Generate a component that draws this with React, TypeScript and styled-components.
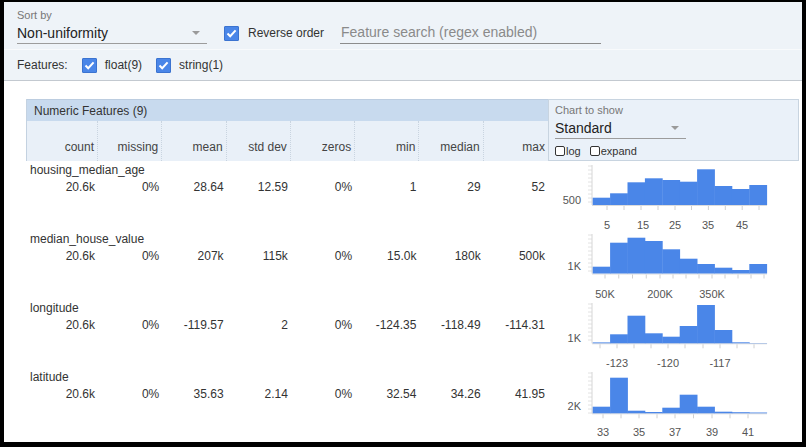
import React from 'react';
import styled, { createGlobalStyle } from 'styled-components';

const GlobalStyle = createGlobalStyle`
  html, body { margin: 0; padding: 0; background: #fff; }
  body { font-family: "Liberation Sans", Arial, sans-serif; color: #333; }
  * { box-sizing: border-box; }
`;

const Frame = styled.div`
  width: 806px;
  height: 447px;
  border-style: solid;
  border-color: #000;
  border-width: 2px 4px 5px 4px;
  background: #fff;
  display: flex;
  flex-direction: column;
  overflow: hidden;
`;

const TopBar = styled.div`
  height: 48px;
  background: #eef3f8;
  border-bottom: 1px solid #f8fafc;
  display: flex;
  align-items: flex-start;
  padding: 7px 0 0 13px;
`;

const SelectBox = styled.div<{ $width: number }>`
  width: ${(p) => p.$width}px;
  display: flex;
  flex-direction: column;
`;

const SmallLabel = styled.div`
  font-size: 11px;
  line-height: 13px;
  color: #777;
`;

const SelectValue = styled.div`
  height: 22px;
  border-bottom: 1px solid #9c9c9c;
  display: flex;
  align-items: center;
  justify-content: space-between;
  padding-right: 7px;
  font-size: 14px;
  color: #222;
`;

const Caret = styled.span`
  width: 0;
  height: 0;
  border-left: 4px solid transparent;
  border-right: 4px solid transparent;
  border-top: 4px solid #9a9a9a;
`;

const CheckGroup = styled.label<{ $mt?: number; $ml?: number; $gap?: number }>`
  display: flex;
  align-items: center;
  gap: ${(p) => p.$gap ?? 8}px;
  margin-top: ${(p) => p.$mt ?? 0}px;
  margin-left: ${(p) => p.$ml ?? 0}px;
  font-size: 12px;
  line-height: 15px;
  color: #333;
`;

const BlueBox = styled.span`
  width: 15px;
  height: 15px;
  background: #4a86e8;
  border: 1px solid #3b73d0;
  border-radius: 1px;
  display: flex;
  align-items: center;
  justify-content: center;
`;

const SearchInput = styled.input`
  margin-left: 16px;
  margin-top: 13px;
  width: 261px;
  height: 22px;
  border: none;
  border-bottom: 1px solid #8c8c8c;
  background: transparent;
  padding: 0 0 1px 1px;
  font-family: "Liberation Sans", Arial, sans-serif;
  font-size: 14px;
  outline: none;
  &::placeholder { color: #8a8a8a; }
`;

const FeatureBar = styled.div`
  height: 31px;
  background: #eef3f8;
  border-bottom: 1px solid #c3c9d0;
  display: flex;
  align-items: center;
  padding-left: 13px;
  font-size: 12px;
  color: #333;
`;

const FeaturesLabel = styled.span`
  margin-right: 14px;
`;

const Content = styled.div`
  flex: 1;
  padding: 18px 0 0 22px;
`;

const Table = styled.div`
  width: 773px;
  display: flex;
  flex-direction: column;
`;

const HeaderBlock = styled.div`
  display: flex;
  height: 62px;
`;

const HeaderLeft = styled.div`
  width: 522px;
  display: flex;
  flex-direction: column;
  border-left: 1px solid #c4d2e1;
`;

const TitleBar = styled.div`
  height: 22px;
  background: #c8daee;
  border-top: 1px solid #bccde0;
  display: flex;
  align-items: center;
  padding-left: 7px;
  font-size: 12px;
  color: #333;
`;

const ColumnRow = styled.div`
  height: 40px;
  background: #e9f0f8;
  display: grid;
  grid-template-columns: 71px repeat(7, 64.29px);
`;

const ColHead = styled.div<{ $last?: boolean }>`
  display: flex;
  align-items: flex-end;
  justify-content: flex-end;
  padding: 0 3px 7px 0;
  font-size: 12px;
  line-height: 14px;
  color: #444;
  border-right: ${(p) => (p.$last ? 'none' : '1px dotted #c9d4e0')};
`;

const ChartPanel = styled.div`
  width: 251px;
  background: #eaf1f9;
  border: 1px solid #c8d4e0;
  padding: 4px 0 0 6px;
  display: flex;
  flex-direction: column;
`;

const SmallChecks = styled.div`
  display: flex;
  align-items: center;
  margin-top: 5px;
  font-size: 11px;
  line-height: 14px;
  color: #333;
`;

const SmallCheck = styled.span<{ $ml?: number }>`
  display: flex;
  align-items: center;
  gap: 1px;
  margin-left: ${(p) => p.$ml ?? 0}px;
`;

const TinyBox = styled.span`
  width: 10px;
  height: 10px;
  border: 1px solid #333;
  border-radius: 2px;
  background: #fff;
`;

const DataRow = styled.div`
  height: 69px;
  display: grid;
  grid-template-columns: 72px repeat(7, 64.29px) 251px;
  grid-template-rows: 17px 17px 1fr;
`;

const FeatureName = styled.div`
  grid-column: 1 / 9;
  grid-row: 1;
  padding: 2px 0 0 4px;
  font-size: 12px;
  line-height: 14px;
  color: #333;
`;

const Value = styled.div`
  grid-row: 2;
  padding: 2px 3px 0 0;
  text-align: right;
  font-size: 12px;
  line-height: 14px;
  color: #333;
`;

const ChartCell = styled.div`
  grid-column: 9;
  grid-row: 1 / 4;
`;

const CheckMark = () => (
  <svg width="13" height="13" viewBox="0 0 13 13">
    <path d="M2.5 6.5 L5.2 9.3 L10.6 3.4" stroke="#fff" strokeWidth="2" fill="none" />
  </svg>
);

type ChartSpec = {
  tops: number[];
  base: number;
  yLabel: string;
  yLabelY: number;
  xLabels: { x: number; t: string }[];
  ticks: number[];
};

const AXIS_X = 44;
const BAR_W = 17.4;

const Histogram: React.FC<{ spec: ChartSpec }> = ({ spec }) => {
  const minor: number[] = [];
  for (let y = 5; y < spec.base; y += 4) minor.push(y);
  return (
    <svg width="251" height="69" viewBox="0 0 251 69">
      {minor.map((y) => (
        <line key={y} x1={AXIS_X - 4} x2={AXIS_X} y1={y} y2={y} stroke="#e2e2e2" strokeWidth="1" />
      ))}
      <line x1={AXIS_X} x2={AXIS_X} y1={4} y2={spec.base} stroke="#d6d6d6" strokeWidth="1" />
      <line x1={AXIS_X} x2={AXIS_X + BAR_W * 10 + 1} y1={spec.base + 0.5} y2={spec.base + 0.5} stroke="#dcdcdc" strokeWidth="1" />
      {spec.ticks.map((x) => (
        <line key={x} x1={x} x2={x} y1={spec.base + 1} y2={spec.base + 5} stroke="#d0d0d0" strokeWidth="1" />
      ))}
      {spec.tops.map((t, i) => (
        <rect
          key={i}
          x={AXIS_X + 0.7 + i * BAR_W}
          y={t}
          width={BAR_W + 0.4}
          height={Math.max(0, spec.base - t)}
          fill="#4a86e8"
        />
      ))}
      <text x={33} y={spec.yLabelY + 4} textAnchor="end" fontSize="11" fill="#555" fontFamily="Liberation Sans, Arial, sans-serif">
        {spec.yLabel}
      </text>
      {spec.xLabels.map((l) => (
        <text key={l.t} x={l.x} y={68} textAnchor="middle" fontSize="11" fill="#555" fontFamily="Liberation Sans, Arial, sans-serif">
          {l.t}
        </text>
      ))}
    </svg>
  );
};

const between = (xs: number[]) => {
  const out: number[] = [];
  xs.forEach((x, i) => {
    out.push(x);
    if (i < xs.length - 1) out.push((x + xs[i + 1]) / 2);
  });
  return out;
};

type Feature = { name: string; values: string[]; chart: ChartSpec };

const features: Feature[] = [
  {
    name: 'housing_median_age',
    values: ['20.6k', '0%', '28.64', '12.59', '0%', '1', '29', '52'],
    chart: {
      tops: [36.7, 32.3, 21.3, 17.3, 19, 20.7, 8.3, 25, 28, 24],
      base: 44,
      yLabel: '500',
      yLabelY: 39,
      xLabels: [
        { x: 59, t: '5' },
        { x: 95, t: '15' },
        { x: 127, t: '25' },
        { x: 160, t: '35' },
        { x: 194, t: '45' },
      ],
      ticks: [59, 76, 93, 110, 127, 143.5, 160.4, 177.3, 194.2, 211],
    },
  },
  {
    name: 'median_house_value',
    values: ['20.6k', '0%', '207k', '115k', '0%', '15.0k', '180k', '500k'],
    chart: {
      tops: [36.7, 12.7, 7.7, 11, 19.3, 28.7, 34, 37.7, 40, 34],
      base: 43.5,
      yLabel: '1K',
      yLabelY: 36,
      xLabels: [
        { x: 57, t: '50K' },
        { x: 112, t: '200K' },
        { x: 164, t: '350K' },
      ],
      ticks: between([57, 84.5, 112, 138, 164, 190, 216]),
    },
  },
  {
    name: 'longitude',
    values: ['20.6k', '0%', '-119.57', '2', '0%', '-124.35', '-118.49', '-114.31'],
    chart: {
      tops: [43.4, 35.3, 16.7, 34.3, 37.7, 27, 6, 31, 43.3, 44],
      base: 44.3,
      yLabel: '1K',
      yLabelY: 39,
      xLabels: [
        { x: 69, t: '-123' },
        { x: 120, t: '-120' },
        { x: 172, t: '-117' },
      ],
      ticks: between([52, 69, 86, 103, 120, 137, 155, 172, 189, 206]).filter((_, i) => i % 2 === 0),
    },
  },
  {
    name: 'latitude',
    values: ['20.6k', '0%', '35.63', '2.14', '0%', '32.54', '34.26', '41.95'],
    chart: {
      tops: [38.7, 9.7, 42.7, 44, 39.7, 26.7, 38.7, 43.7, 44.2, 44.5],
      base: 45.3,
      yLabel: '2K',
      yLabelY: 38,
      xLabels: [
        { x: 55, t: '33' },
        { x: 91, t: '35' },
        { x: 127, t: '37' },
        { x: 164, t: '39' },
        { x: 200, t: '41' },
      ],
      ticks: [55, 73, 91, 109, 127, 145.5, 164, 182, 200],
    },
  },
];

const columns = ['count', 'missing', 'mean', 'std dev', 'zeros', 'min', 'median', 'max'];

export default function App() {
  return (
    <>
      <GlobalStyle />
      <Frame>
        <TopBar>
          <SelectBox $width={190}>
            <SmallLabel>Sort by</SmallLabel>
            <SelectValue>
              <span>Non-uniformity</span>
              <Caret />
            </SelectValue>
          </SelectBox>
          <CheckGroup $mt={17} $ml={17} $gap={9}>
            <BlueBox>
              <CheckMark />
            </BlueBox>
            <span>Reverse order</span>
          </CheckGroup>
          <SearchInput placeholder="Feature search (regex enabled)" />
        </TopBar>
        <FeatureBar>
          <FeaturesLabel>Features:</FeaturesLabel>
          <CheckGroup $gap={8}>
            <BlueBox>
              <CheckMark />
            </BlueBox>
            <span>float(9)</span>
          </CheckGroup>
          <CheckGroup $gap={8} $ml={14}>
            <BlueBox>
              <CheckMark />
            </BlueBox>
            <span>string(1)</span>
          </CheckGroup>
        </FeatureBar>
        <Content>
          <Table>
            <HeaderBlock>
              <HeaderLeft>
                <TitleBar>Numeric Features (9)</TitleBar>
                <ColumnRow>
                  {columns.map((c, i) => (
                    <ColHead key={c} $last={i === columns.length - 1}>
                      {c}
                    </ColHead>
                  ))}
                </ColumnRow>
              </HeaderLeft>
              <ChartPanel>
                <SmallLabel>Chart to show</SmallLabel>
                <SelectBox $width={131}>
                  <SelectValue>
                    <span>Standard</span>
                    <Caret />
                  </SelectValue>
                </SelectBox>
                <SmallChecks>
                  <SmallCheck>
                    <TinyBox />
                    <span>log</span>
                  </SmallCheck>
                  <SmallCheck $ml={9}>
                    <TinyBox />
                    <span>expand</span>
                  </SmallCheck>
                </SmallChecks>
              </ChartPanel>
            </HeaderBlock>
            {features.map((f) => (
              <DataRow key={f.name}>
                <FeatureName>{f.name}</FeatureName>
                {f.values.map((v, i) => (
                  <Value key={i}>{v}</Value>
                ))}
                <ChartCell>
                  <Histogram spec={f.chart} />
                </ChartCell>
              </DataRow>
            ))}
          </Table>
        </Content>
      </Frame>
    </>
  );
}
